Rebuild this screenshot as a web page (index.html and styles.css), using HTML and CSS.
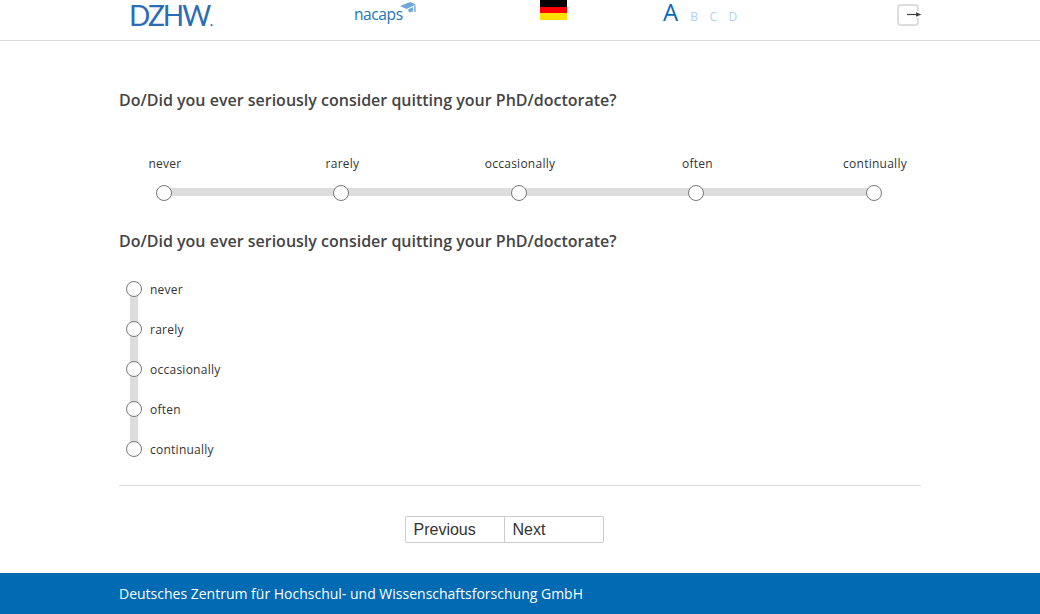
FILE: index.html
```html
<!DOCTYPE html>
<html lang="en">
<head>
    <meta charset="UTF-8">
    <meta name="viewport" content="width=device-width, initial-scale=1.0">
    <title>Nacaps</title>
    <link rel="stylesheet" href="styles.css">
</head>
<body>
    <header class="top-bar">
        <div class="top-inner">
            <div class="logo-dzhw">DZHW<span class="logo-dot">.</span></div>
            <div class="logo-nacaps">
                <span>nacaps</span>
                <svg class="cap-icon" width="16" height="13" viewBox="0 0 16 13">
                    <path d="M0 4 L10 0 L16 2.5 L6.5 7 Z" fill="#6fa8d6"/>
                    <path d="M8 7.5 L13 5 L13 9.5 L9 10.5 Z" fill="#6fa8d6"/>
                    <rect x="14.2" y="3.5" width="1.4" height="6.5" fill="#6fa8d6"/>
                </svg>
            </div>
            <div class="flag">
                <div class="flag-black"></div>
                <div class="flag-red"></div>
                <div class="flag-gold"></div>
            </div>
            <div class="font-size">
                <span class="size-active">A</span>
                <span>B</span>
                <span>C</span>
                <span>D</span>
            </div>
            <button class="exit-button" aria-label="Exit">
                <svg class="exit-arrow" width="16" height="7" viewBox="0 0 16 7">
                    <rect x="10" y="0" width="3" height="7" fill="#fff"/>
                    <path d="M1 3.5 H11" stroke="#444" stroke-width="1.2"/>
                    <path d="M10 1.3 L15.5 3.5 L10 5.7 Z" fill="#444"/>
                </svg>
            </button>
        </div>
    </header>

    <main class="container">
        <h2 class="question question-first">Do/Did you ever seriously consider quitting your PhD/doctorate?</h2>
        <div class="scale-row">
            <label class="scale-item"><span>never</span><input type="radio" name="q1"></label>
            <label class="scale-item"><span>rarely</span><input type="radio" name="q1"></label>
            <label class="scale-item"><span>occasionally</span><input type="radio" name="q1"></label>
            <label class="scale-item"><span>often</span><input type="radio" name="q1"></label>
            <label class="scale-item"><span>continually</span><input type="radio" name="q1"></label>
        </div>

        <h2 class="question question-second">Do/Did you ever seriously consider quitting your PhD/doctorate?</h2>
        <div class="scale-column">
            <label class="column-item"><input type="radio" name="q2"><span>never</span></label>
            <label class="column-item"><input type="radio" name="q2"><span>rarely</span></label>
            <label class="column-item"><input type="radio" name="q2"><span>occasionally</span></label>
            <label class="column-item"><input type="radio" name="q2"><span>often</span></label>
            <label class="column-item"><input type="radio" name="q2"><span>continually</span></label>
        </div>

        <hr class="divider">

        <div class="pager">
            <button class="pager-button">Previous</button>
            <button class="pager-button">Next</button>
        </div>
    </main>

    <footer class="page-footer">
        <div class="footer-inner">Deutsches Zentrum für Hochschul- und Wissenschaftsforschung GmbH</div>
    </footer>
</body>
</html>
```

FILE: styles.css
```css
* {
    box-sizing: border-box;
}

body {
    font-family: 'Open Sans', sans-serif;
    background-color: #fff;
    color: #444;
    margin: 0;
    padding: 0;
    height: 614px;
    overflow: hidden;
}

.top-bar {
    height: 41px;
    border-bottom: 1px solid #ddd;
}

.top-inner {
    width: 802px;
    height: 40px;
    margin: auto;
    display: flex;
    align-items: flex-start;
}

.logo-dzhw {
    width: 235px;
    margin-left: 10px;
    padding-top: 1px;
    font-family: 'Lato', sans-serif;
    font-weight: 400;
    font-size: 28px;
    line-height: 28px;
    letter-spacing: -1.9px;
    color: #2b6cb8;
}

.logo-dot {
    font-size: 16px;
}

.logo-nacaps {
    display: flex;
    align-items: flex-start;
    width: 186px;
    margin-left: -10px;
    font-size: 15.5px;
    line-height: 20px;
    letter-spacing: -0.4px;
    padding-top: 4px;
    color: #1f74b5;
}

.cap-icon {
    margin-left: -3px;
    margin-top: -2px;
}

.flag {
    width: 27px;
    height: 20px;
    flex-shrink: 0;
}

.flag-black, .flag-red, .flag-gold {
    height: 33.34%;
}

.flag-black {
    background: #000;
}

.flag-red {
    background: #f00;
}

.flag-gold {
    background: #ffdf00;
}

.font-size {
    display: flex;
    align-items: baseline;
    gap: 11.5px;
    width: 234px;
    margin-left: 96px;
    height: 24px;
    font-size: 12px;
    line-height: 23px;
    color: #aed2ef;
}

.size-active {
    font-size: 24px;
    color: #0a69b7;
    margin-right: 0.5px;
}

.exit-button {
    position: relative;
    width: 22px;
    height: 22px;
    margin-top: 4px;
    padding: 0;
    background: #fff;
    border: 2px solid #ddd;
    border-radius: 4px;
}

.exit-arrow {
    position: absolute;
    left: 7px;
    top: 5px;
}

.container {
    width: 802px;
    height: 532px;
    margin: auto;
}

.question {
    margin: 0;
    font-size: 16px;
    font-weight: 600;
    line-height: 22px;
    color: #444;
}

.question-first {
    padding-top: 48px;
}

.question-second {
    margin-top: 29px;
}

.scale-row {
    position: relative;
    display: flex;
    justify-content: space-between;
    margin-top: 44px;
}

.scale-row::before {
    content: "";
    position: absolute;
    left: 45px;
    right: 47px;
    bottom: 5px;
    height: 8px;
    background: #ddd;
}

.scale-item {
    position: relative;
    width: 92px;
    display: flex;
    flex-direction: column;
    align-items: center;
    gap: 13px;
    font-size: 12px;
    line-height: 17px;
    letter-spacing: 0.25px;
    color: #333;
}

input[type="radio"] {
    appearance: none;
    width: 16px;
    height: 16px;
    margin: 0;
    background: #fff;
    border: 1px solid #777;
    border-radius: 50%;
    flex-shrink: 0;
}

.scale-item input[type="radio"] {
    margin-right: 2.4px;
}

.scale-column {
    position: relative;
    margin-top: 29px;
    padding-left: 7px;
}

.scale-column::before {
    content: "";
    position: absolute;
    left: 11px;
    top: 8px;
    bottom: 8px;
    width: 8px;
    background: #ddd;
}

.column-item {
    position: relative;
    display: flex;
    align-items: center;
    gap: 8px;
    height: 16px;
    margin-bottom: 24px;
    font-size: 12px;
    line-height: 17px;
    letter-spacing: 0.25px;
    color: #333;
}

.column-item:last-child {
    margin-bottom: 0;
}

.divider {
    margin: 28px 0 0;
    border: 0;
    border-top: 1px solid #ddd;
}

.pager {
    display: flex;
    justify-content: center;
    margin-top: 30px;
    padding-right: 31px;
}

.pager-button {
    width: 100px;
    height: 27px;
    padding: 0 0 0 7.5px;
    background: #fff;
    border: 1px solid #ccc;
    border-radius: 2px 0 0 2px;
    font-family: 'Liberation Sans', sans-serif;
    font-size: 16px;
    text-align: left;
    color: #333;
}

.pager-button + .pager-button {
    margin-left: -1px;
    border-radius: 0 2px 2px 0;
}

.page-footer {
    height: 41px;
    background: #006ab3;
    color: #fff;
    font-size: 14px;
    line-height: 41px;
}

.footer-inner {
    width: 802px;
    margin: auto;
}
```
